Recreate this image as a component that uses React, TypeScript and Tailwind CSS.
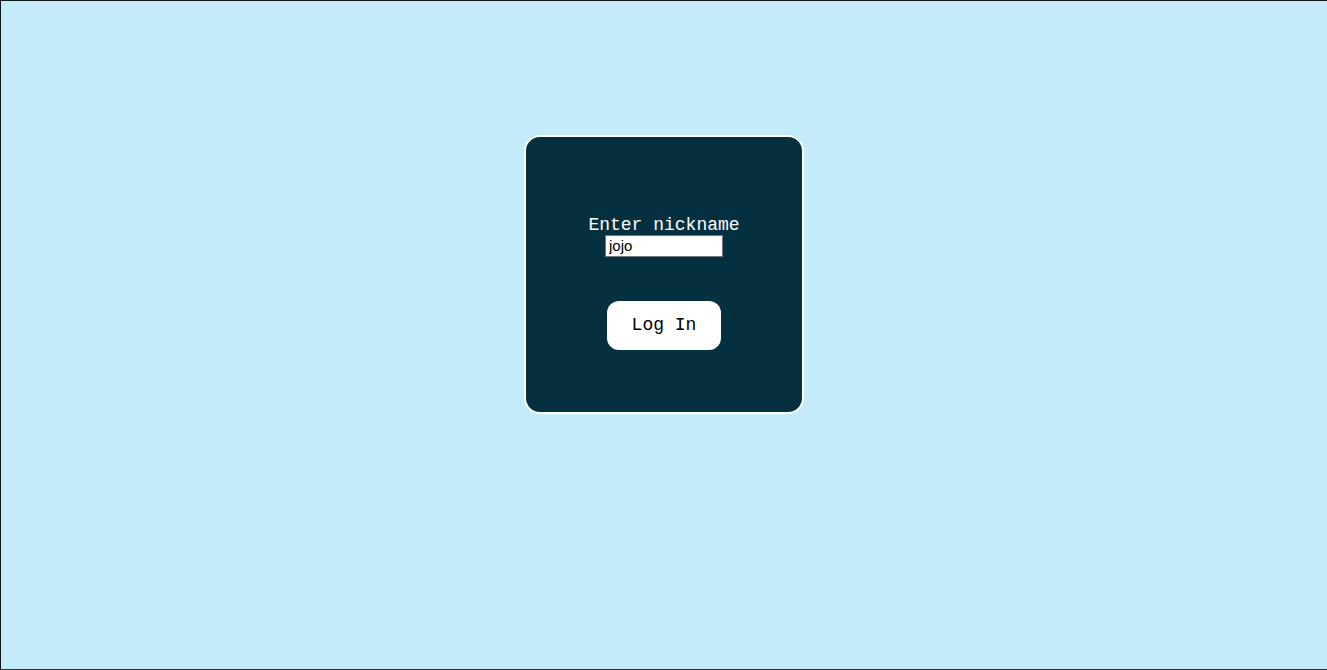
export default function App() {
  return (
    <main className="flex min-h-screen flex-col items-center border-t border-b border-l border-t-[#15151c] border-b-[#2b3338] border-l-[#15151c] bg-[#c4ebf9] pt-[134px] font-['Liberation_Mono','Courier_New',monospace]">
      <form
        className="flex w-[280px] flex-col items-center rounded-2xl border-2 border-white bg-[#05303f] pt-[78px] pb-[62px]"
        onSubmit={(event) => event.preventDefault()}
      >
        <label htmlFor="nickname" className="text-lg leading-5 text-white">
          Enter nickname
        </label>
        <input
          id="nickname"
          type="text"
          defaultValue="jojo"
          className="h-[22px] w-[118px] border border-[#767676] bg-white px-[3px] font-['Liberation_Sans',Arial,sans-serif] text-[15px] text-black"
        />
        <button
          type="submit"
          className="mt-11 rounded-xl bg-white px-[25px] pt-[14px] pb-[15px] text-lg leading-5 text-black"
        >
          Log In
        </button>
      </form>
    </main>
  );
}
